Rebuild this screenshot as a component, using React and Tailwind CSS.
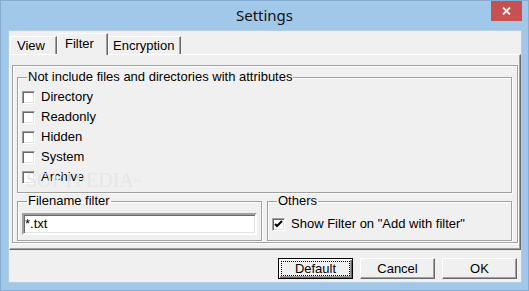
import React from "react";

const font = { fontFamily: '"Liberation Sans", Arial, sans-serif' };

// classic sunken checkbox
const CheckBox = ({ checked }) => (
  <span className="flex h-[13px] w-[13px] shrink-0 items-center justify-center border border-t-[#a0a0a0] border-l-[#a0a0a0] border-r-white border-b-white bg-white shadow-[inset_1px_1px_0_#696969,inset_-1px_-1px_0_#e3e3e3]">
    {checked && (
      <svg width="9" height="9" viewBox="0 0 9 9">
        <path d="M1 4 L3 6 L8 1" fill="none" stroke="#000" strokeWidth="2" />
      </svg>
    )}
  </span>
);

const Option = ({ label, checked }) => (
  <div className="flex h-[20px] items-center gap-[6px]">
    <CheckBox checked={checked} />
    <span className="text-[13px] leading-[16px] text-black">{label}</span>
  </div>
);

const GroupBox = ({ title, className = "", children }) => (
  <fieldset
    className={`border border-[#a0a0a0] shadow-[inset_1px_1px_0_#fff,1px_1px_0_#fff] px-[4px] ${className}`}
  >
    <legend className="ml-[5px] px-[1px] text-[13px] leading-[16px] text-black">
      {title}
    </legend>
    {children}
  </fieldset>
);

const Button = ({ children, isDefault }) => (
  <button
    className={`flex h-[21px] w-[75px] items-center justify-center bg-[#f0f0f0] text-[13px] text-black ${
      isDefault
        ? "border border-black p-[2px] shadow-[inset_1px_1px_0_#fff,inset_-1px_-1px_0_#696969,inset_-2px_-2px_0_#a0a0a0]"
        : "border border-t-white border-l-white border-r-[#696969] border-b-[#696969] shadow-[inset_-1px_-1px_0_#a0a0a0]"
    }`}
  >
    {isDefault ? (
      <span className="flex h-full w-full items-center justify-center border border-dotted border-black leading-none">
        {children}
      </span>
    ) : (
      children
    )}
  </button>
);

export default function App() {
  return (
    <div
      style={font}
      className="h-[291px] w-[529px] overflow-hidden border border-[#86acd2] bg-[#a2c8e9]"
    >
      {/* Title bar */}
      <div className="relative flex h-[29px] items-center justify-center">
        <span
          className="text-[15px] text-[#111]"
          style={{ fontFamily: '"Noto Sans", "Liberation Sans", sans-serif' }}
        >
          Settings
        </span>
        <div className="absolute right-[6px] top-0 flex h-[20px] w-[31px] items-center justify-center bg-[#c75050]">
          <svg width="9" height="8" viewBox="0 0 9 8">
            <path d="M1 0.5 L8 7.5 M8 0.5 L1 7.5" stroke="#fff" strokeWidth="1.8" />
          </svg>
        </div>
      </div>

      {/* Client area */}
      <div className="relative ml-[7px] flex h-[253px] w-[514px] flex-col border border-[#b4cde6] bg-[#f0f0f0]">
        {/* Tabs */}
        <div className="ml-[1px] flex h-[23px] items-end text-[13px] text-black">
          <div className="flex h-[18px] w-[47px] items-center rounded-tl-[2px] border-l border-t border-r border-l-white border-t-white border-r-[#696969] pl-[6px] shadow-[inset_-1px_0_0_#a0a0a0]">
            View
          </div>
          <div className="relative z-10 -mb-[1px] flex h-[22px] w-[51px] items-center rounded-tl-[2px] border-l border-t border-r border-l-white border-t-white border-r-[#696969] bg-[#f0f0f0] pl-[7px] pb-[1px] shadow-[inset_-1px_0_0_#a0a0a0]">
            Filter
          </div>
          <div className="flex h-[18px] w-[73px] items-center rounded-tl-[2px] border-l border-t border-r border-l-white border-t-white border-r-[#696969] pl-[4px] shadow-[inset_-1px_0_0_#a0a0a0]">
            Encryption
          </div>
        </div>

        {/* Tab page */}
        <div className="h-[196px] w-[512px] border border-l-white border-t-white border-r-[#696969] border-b-[#696969] px-[2px] pb-[2px] pt-[10px] shadow-[inset_-1px_-1px_0_#a0a0a0]">
          <div className="border border-[#a0a0a0] pl-[4px] pr-[5px] pt-[3px] pb-[1px] shadow-[inset_1px_1px_0_#fff,1px_1px_0_#fff]">
            <GroupBox title="Not include files and directories with attributes" className="pt-[2px] pb-[5px]">
              <Option label="Directory" />
              <Option label="Readonly" />
              <Option label="Hidden" />
              <Option label="System" />
              <Option label="Archive" />
            </GroupBox>
            <div className="flex gap-[5px]">
              <GroupBox title="Filename filter" className="flex-1 pt-[4px] pb-[5px]">
                <div className="flex h-[22px] items-center border-2 border-t-[#a0a0a0] border-l-[#a0a0a0] border-r-white border-b-white bg-white pl-[1px] text-[13px] text-black shadow-[inset_1px_1px_0_#696969,inset_-1px_-1px_0_#e3e3e3]">
                  *.txt
                </div>
              </GroupBox>
              <GroupBox title="Others" className="flex-1 pt-[4px] pb-[5px]">
                <div className="flex h-[22px] items-center gap-[6px]">
                  <CheckBox checked />
                  <span className="text-[13px] text-black">
                    Show Filter on "Add with filter"
                  </span>
                </div>
              </GroupBox>
            </div>
          </div>
        </div>

        {/* Buttons */}
        <div className="mr-[4px] mt-[8px] flex justify-end gap-[7px]">
          <Button isDefault>Default</Button>
          <Button>Cancel</Button>
          <Button>OK</Button>
        </div>

        {/* watermark */}
        <div
          className="pointer-events-none absolute left-[17px] top-[134px] text-[20px] text-[#e6e6e6]"
          style={{ fontFamily: '"Liberation Serif", serif' }}
        >
          SOFTPEDIA<sup className="text-[7px]">™</sup>
        </div>
      </div>
    </div>
  );
}
